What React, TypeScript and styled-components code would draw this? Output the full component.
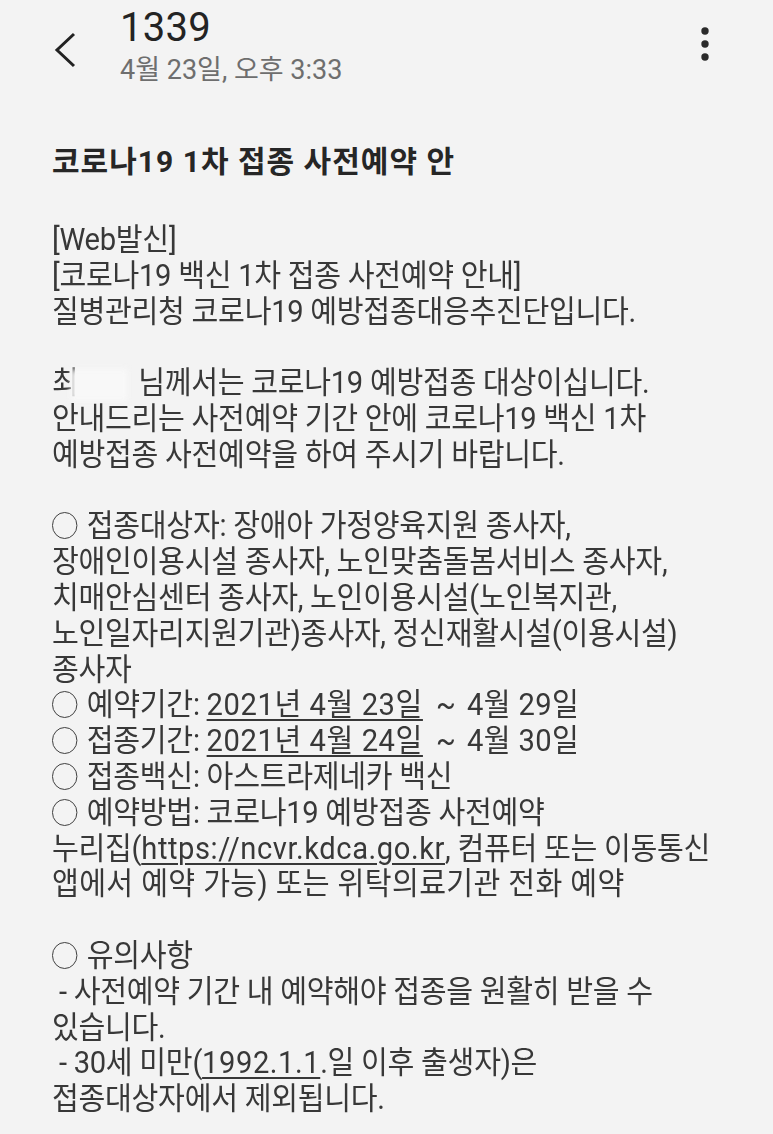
import React from 'react';
import styled, { createGlobalStyle } from 'styled-components';

const GlobalStyle = createGlobalStyle`
  html, body {
    margin: 0;
    padding: 0;
    background: #f3f3f3;
  }
  body {
    font-family: Roboto, "Noto Sans CJK KR", sans-serif;
  }
`;

const Screen = styled.div`
  width: 773px;
  height: 1134px;
  background: #f3f3f3;
  overflow: hidden;
  color: #383838;
`;

const Header = styled.div`
  display: flex;
  align-items: flex-start;
  padding: 6px 0 0 48px;
  height: 100px;
  box-sizing: border-box;
`;

const BackButton = styled.div`
  width: 34px;
  height: 40px;
  margin-top: 24px;
  display: flex;
  align-items: center;
  justify-content: center;
`;

const HeaderText = styled.div`
  margin-left: 38px;
  flex: 1;
`;

const Sender = styled.div`
  font-size: 40px;
  line-height: 44px;
  color: #232323;
  letter-spacing: 0.3px;
`;

const Stamp = styled.div`
  font-size: 27px;
  line-height: 32px;
  margin-top: 4px;
  color: #6e6e6e;
  letter-spacing: 0;
`;

const MoreButton = styled.div`
  width: 40px;
  margin: 20px 48px 0 0;
  display: flex;
  justify-content: center;
`;

const Body = styled.div`
  padding: 42px 0 0 52px;
`;

const Title = styled.div`
  font-size: 30px;
  line-height: 40px;
  font-weight: 700;
  color: #262626;
  letter-spacing: 1px;
  margin-bottom: 40px;
`;

const Para = styled.div`
  & + & {
    margin-top: 35.8px;
  }
`;

const Line = styled.div`
  font-size: 31px;
  line-height: 35.8px;
  letter-spacing: -0.3px;
  white-space: nowrap;
  transform: scaleX(0.94);
  transform-origin: left center;
`;

const Wide = styled.span`
  letter-spacing: 0.4px;
`;

const U = styled.span`
  letter-spacing: 0.6px;
  text-decoration: underline;
  text-decoration-thickness: 2px;
  text-underline-offset: 4px;
`;

const Tilde = styled.span`
  margin: 0 12px 0 14px;
`;

const Circle = styled.span`
  display: inline-block;
  width: 27px;
  height: 27px;
  border: 1.7px solid #3a3a3a;
  border-radius: 50%;
  box-sizing: border-box;
  margin: 0 10px 0 0;
  vertical-align: -3px;
`;

const Blur = styled.span`
  display: inline-block;
  width: 60px;
  height: 32px;
  margin: 0 4px 0 -8px;
  background: #f8f8f8;
  filter: blur(3px);
  vertical-align: middle;
`;

const Bullet: React.FC<{ children: React.ReactNode }> = ({ children }) => (
  <Line>
    <Circle />
    {children}
  </Line>
);

export default function App() {
  return (
    <Screen>
      <GlobalStyle />
      <Header>
        <BackButton>
          <svg width="26" height="38" viewBox="0 0 26 38">
            <path d="M22 3 L5 19 L22 35" fill="none" stroke="#222" strokeWidth="3" />
          </svg>
        </BackButton>
        <HeaderText>
          <Sender>1339</Sender>
          <Stamp>4월 23일, 오후 3:33</Stamp>
        </HeaderText>
        <MoreButton>
          <svg width="10" height="36" viewBox="0 0 10 36">
            <circle cx="5" cy="5" r="3.7" fill="#2a2a2a" />
            <circle cx="5" cy="18" r="3.7" fill="#2a2a2a" />
            <circle cx="5" cy="31" r="3.7" fill="#2a2a2a" />
          </svg>
        </MoreButton>
      </Header>
      <Body>
        <Title>코로나19 1차 접종 사전예약 안</Title>
        <Para>
          <Line>[Web발신]</Line>
          <Line>[코로나19 백신 1차 접종 사전예약 안내]</Line>
          <Line>질병관리청 코로나19 예방접종대응추진단입니다.</Line>
        </Para>
        <Para>
          <Line>
            최<Blur /> 님께서는 코로나19 예방접종 대상이십니다.
          </Line>
          <Line>안내드리는 사전예약 기간 안에 코로나19 백신 1차</Line>
          <Line>예방접종 사전예약을 하여 주시기 바랍니다.</Line>
        </Para>
        <Para>
          <Bullet>접종대상자: 장애아 가정양육지원 종사자,</Bullet>
          <Line>장애인이용시설 종사자, 노인맞춤돌봄서비스 종사자,</Line>
          <Line>치매안심센터 종사자, 노인이용시설(노인복지관,</Line>
          <Line>노인일자리지원기관)종사자, 정신재활시설(이용시설)</Line>
          <Line>종사자</Line>
          <Bullet>
            예약기간: <U>2021년 4월 23일</U>
            <Tilde>~</Tilde>
            <Wide>4월 29일</Wide>
          </Bullet>
          <Bullet>
            접종기간: <U>2021년 4월 24일</U>
            <Tilde>~</Tilde>
            <Wide>4월 30일</Wide>
          </Bullet>
          <Bullet>접종백신: 아스트라제네카 백신</Bullet>
          <Bullet>예약방법: 코로나19 예방접종 사전예약</Bullet>
          <Line>
            누리집(<U>https://ncvr.kdca.go.kr</U>, 컴퓨터 또는 이동통신
          </Line>
          <Line>
            <Wide>앱에서 예약 가능) 또는 위탁의료기관 전화 예약</Wide>
          </Line>
        </Para>
        <Para>
          <Bullet>유의사항</Bullet>
          <Line>&nbsp;- 사전예약 기간 내 예약해야 접종을 원활히 받을 수</Line>
          <Line>있습니다.</Line>
          <Line>
            &nbsp;- 30세 미만(<U>1992.1.1</U>.일 이후 출생자)은
          </Line>
          <Line>접종대상자에서 제외됩니다.</Line>
        </Para>
      </Body>
    </Screen>
  );
}
